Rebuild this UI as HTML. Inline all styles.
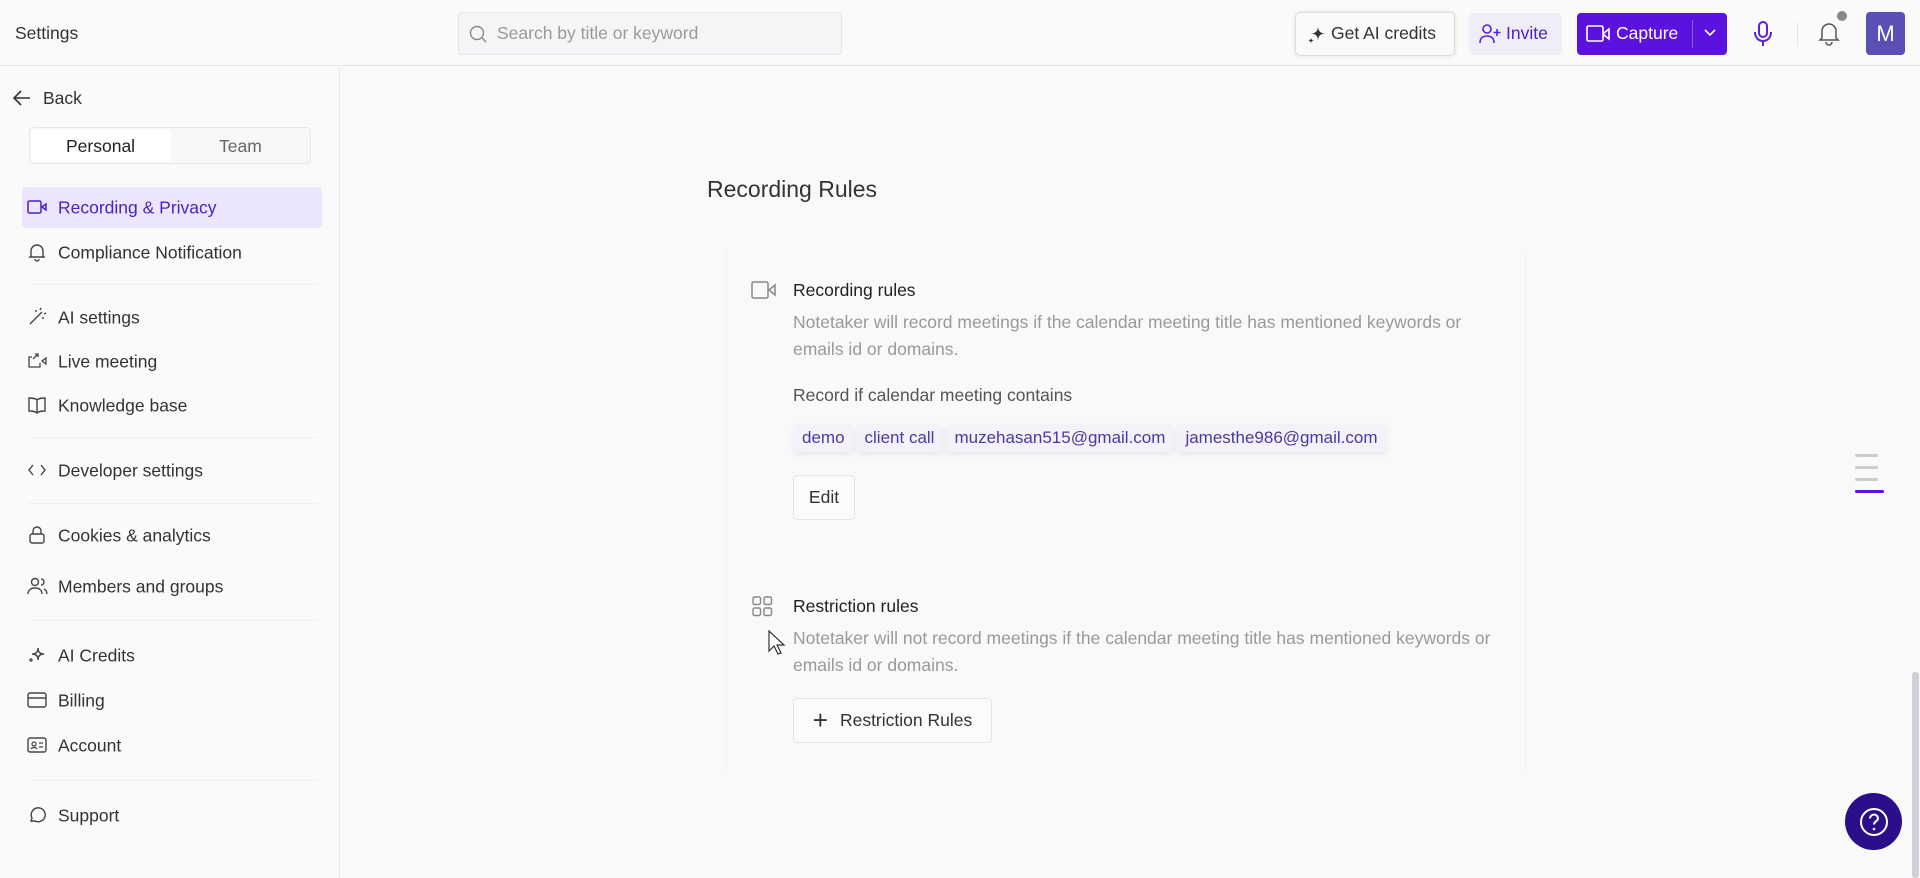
<!DOCTYPE html>
<html><head><meta charset="utf-8"><style>
*{box-sizing:border-box;margin:0;padding:0}
body{width:1920px;height:878px;background:#f9f9f9;font-family:"Liberation Sans",sans-serif;color:#333;position:relative;overflow:hidden}
.a{position:absolute}
.hdr{left:0;top:0;width:1920px;height:66px;border-bottom:1px solid #e6e6e6;background:#fafafa}
.side{left:0;top:67px;width:340px;height:811px;border-right:1px solid #e8e8e8;background:#fafafa}
.it{position:absolute;left:58px;font-size:17.5px;color:#333;transform:translateY(-50%)}
.ic{position:absolute;left:27px;transform:translateY(-50%)}
.sep{position:absolute;left:28px;width:290px;height:1px;background:#f0f0f0}
svg{display:block}
.chip{display:inline-block;font-size:17px;color:#4a3aa0;padding:4px 8px;margin-right:4px;background:#f3f2f9;border-radius:4px;box-shadow:0 3px 6px rgba(90,80,180,.10)}
.btn{border:1px solid #e6e6e6;border-radius:4px;background:#fbfbfb;font-size:17.5px;color:#333;display:flex;align-items:center;justify-content:center}
</style></head><body>
<div class="a hdr"></div>
<div class="a" style="left:15px;top:23px;font-size:17.5px;color:#333">Settings</div>
<div class="a" style="left:458px;top:12px;width:384px;height:43px;border:1px solid #e4e4ea;border-radius:4px;background:#f5f5f7"></div>
<svg class="a" style="left:468px;top:24px" width="20" height="20" viewBox="0 0 20 20"><circle cx="9" cy="9" r="6.5" fill="none" stroke="#888" stroke-width="1.4"/><path d="M14 14l4 4" stroke="#888" stroke-width="1.4"/></svg>
<div class="a" style="left:497px;top:23px;font-size:17.5px;color:#999">Search by title or keyword</div>
<div class="a" style="left:1295px;top:12px;width:160px;height:44px;border:1px solid #ddd;border-radius:5px;background:#fafafa;box-shadow:0 0 4px rgba(0,0,0,.12)"></div>
<svg class="a" style="left:1306px;top:24px" width="22" height="22" viewBox="0 0 22 22"><path d="M12 2c0 5 2.5 7.5 7.5 7.5-5 0-7.5 2.5-7.5 7.5 0-5-2.5-7.5-7.5-7.5 5 0 7.5-2.5 7.5-7.5z" fill="#333"/><path d="M5 13c0 2.5 1 3.5 3.5 3.5-2.5 0-3.5 1-3.5 3.5 0-2.5-1-3.5-3.5-3.5 2.5 0 3.5-1 3.5-3.5z" fill="#333"/></svg>
<div class="a" style="left:1331px;top:23px;font-size:17.5px;color:#333">Get AI credits</div>
<div class="a" style="left:1469px;top:13px;width:93px;height:42px;border-radius:5px;background:#efedf8"></div>
<svg class="a" style="left:1478px;top:23px" width="24" height="22" viewBox="0 0 24 22"><circle cx="9" cy="6" r="4" fill="none" stroke="#5b21d6" stroke-width="1.6"/><path d="M2 20c0-5 3-7 7-7s7 2 7 7M19 6v7M15.5 9.5h7" fill="none" stroke="#5b21d6" stroke-width="1.6"/></svg>
<div class="a" style="left:1506px;top:23px;font-size:17.5px;color:#4b1fc4">Invite</div>
<div class="a" style="left:1577px;top:13px;width:150px;height:42px;border-radius:4px;background:#5b12df"></div>
<svg class="a" style="left:1586px;top:24px" width="26" height="20" viewBox="0 0 26 20"><rect x="1" y="2" width="16" height="15" rx="1.5" fill="none" stroke="#fff" stroke-width="1.6"/><path d="M18 9l5-4v10l-5-4z" fill="none" stroke="#fff" stroke-width="1.6"/></svg>
<div class="a" style="left:1616px;top:23px;font-size:17.5px;color:#fff">Capture</div>
<div class="a" style="left:1692px;top:20px;width:1px;height:28px;background:#8a5ff0"></div>
<svg class="a" style="left:1703px;top:28px" width="14" height="10" viewBox="0 0 14 10"><path d="M2 2l5 5 5-5" fill="none" stroke="#fff" stroke-width="1.6"/></svg>
<svg class="a" style="left:1752px;top:20px" width="22" height="28" viewBox="0 0 22 28"><rect x="7" y="2" width="8" height="15" rx="4" fill="none" stroke="#5b21d6" stroke-width="2"/><path d="M3 12c0 6 4 9 8 9s8-3 8-9M11 21v5" fill="none" stroke="#5b21d6" stroke-width="2"/></svg>
<div class="a" style="left:1797px;top:22px;width:1px;height:24px;background:#e5e5e5"></div>
<svg class="a" style="left:1818px;top:20px" width="22" height="26" viewBox="0 0 22 26"><path d="M4 18V11a7 7 0 0114 0v7l2 2H2z M8 22a3 3 0 006 0" fill="none" stroke="#555" stroke-width="1.5"/></svg>
<div class="a" style="left:1837px;top:11px;width:10px;height:10px;border-radius:50%;background:#888"></div>
<div class="a" style="left:1866px;top:12px;width:39px;height:43px;border-radius:4px;background:#5a4fb5;color:#fff;font-size:22px;display:flex;align-items:center;justify-content:center">M</div>

<div class="a side"></div>
<svg class="a" style="left:12px;top:89px" width="20" height="18" viewBox="0 0 20 18"><path d="M18 9H3M9 2L2 9l7 7" fill="none" stroke="#333" stroke-width="1.6"/></svg>
<div class="a" style="left:43px;top:88px;font-size:17.5px;color:#333">Back</div>
<div class="a" style="left:29px;top:127px;width:282px;height:37px;border:1px solid #e8e8e8;border-radius:4px;background:#f7f7f7"></div>
<div class="a" style="left:31px;top:129px;width:140px;height:33px;background:#fff;border-radius:3px"></div>
<div class="a" style="left:66px;top:136px;font-size:17.5px;color:#222">Personal</div>
<div class="a" style="left:219px;top:136px;font-size:17.5px;color:#666">Team</div>
<div class="a" style="left:22px;top:187px;width:300px;height:41px;border-radius:4px;background:#ebe6fb"></div>
<svg class="ic" style="top:207px" width="22" height="16" viewBox="0 0 22 16"><rect x="1" y="2" width="13" height="12" rx="1.5" fill="none" stroke="#4b1fc4" stroke-width="1.5"/><path d="M15 8l4-3v6z" fill="none" stroke="#4b1fc4" stroke-width="1.5"/></svg>
<div class="it" style="top:208px;color:#4b1fc4">Recording &amp; Privacy</div>
<svg class="ic" style="top:252px" width="20" height="20" viewBox="0 0 20 20"><path d="M4 14V9a6 6 0 0112 0v5l1 1H3z M8 17a2 2 0 004 0" fill="none" stroke="#444" stroke-width="1.4"/></svg>
<div class="it" style="top:253px">Compliance Notification</div>
<div class="sep" style="top:284px"></div>
<svg class="ic" style="top:317px" width="20" height="20" viewBox="0 0 20 20"><path d="M3 17L15 5M13 3l1-2M17 7l2-1M9 3v2M15 11h2" fill="none" stroke="#444" stroke-width="1.4"/></svg>
<div class="it" style="top:318px">AI settings</div>
<svg class="ic" style="top:361px" width="20" height="16" viewBox="0 0 20 16"><path d="M5 4H2v10h11V10M15 8l4-3v6z M6 6l5-5M8 1h3v3" fill="none" stroke="#444" stroke-width="1.3"/></svg>
<div class="it" style="top:362px">Live meeting</div>
<svg class="ic" style="top:405px" width="20" height="18" viewBox="0 0 20 18"><path d="M10 4v13M10 4C8 2 5 2 2 2v13c3 0 6 0 8 2 2-2 5-2 8-2V2c-3 0-6 0-8 2z" fill="none" stroke="#444" stroke-width="1.4"/></svg>
<div class="it" style="top:406px">Knowledge base</div>
<div class="sep" style="top:437px"></div>
<svg class="ic" style="top:470px" width="20" height="16" viewBox="0 0 20 16"><path d="M6 3L2 8l4 5M14 3l4 5-4 5" fill="none" stroke="#444" stroke-width="1.4"/></svg>
<div class="it" style="top:471px">Developer settings</div>
<div class="sep" style="top:503px"></div>
<svg class="ic" style="top:535px" width="20" height="20" viewBox="0 0 20 20"><rect x="3" y="9" width="14" height="9" rx="2" fill="none" stroke="#444" stroke-width="1.4"/><path d="M6 9V6a4 4 0 018 0v3" fill="none" stroke="#444" stroke-width="1.4"/></svg>
<div class="it" style="top:536px">Cookies &amp; analytics</div>
<svg class="ic" style="top:586px" width="22" height="20" viewBox="0 0 22 20"><circle cx="8" cy="6" r="3.5" fill="none" stroke="#444" stroke-width="1.4"/><path d="M1 18c0-4 3-6 7-6s7 2 7 6M14 3a3 3 0 010 6M17 13c2 1 3 3 3 5" fill="none" stroke="#444" stroke-width="1.4"/></svg>
<div class="it" style="top:587px">Members and groups</div>
<div class="sep" style="top:620px"></div>
<svg class="ic" style="top:655px" width="20" height="20" viewBox="0 0 20 20"><path d="M11 3c0 4 2 6 6 6-4 0-6 2-6 6 0-4-2-6-6-6 4 0 6-2 6-6z" fill="none" stroke="#444" stroke-width="1.4"/><path d="M4 13v4M2 15h4" stroke="#444" stroke-width="1.3"/></svg>
<div class="it" style="top:656px">AI Credits</div>
<svg class="ic" style="top:700px" width="20" height="16" viewBox="0 0 20 16"><rect x="1" y="1" width="18" height="14" rx="2" fill="none" stroke="#444" stroke-width="1.4"/><path d="M1 6h18" stroke="#444" stroke-width="1.4"/></svg>
<div class="it" style="top:701px">Billing</div>
<svg class="ic" style="top:745px" width="20" height="16" viewBox="0 0 20 16"><rect x="1" y="1" width="18" height="14" rx="2" fill="none" stroke="#444" stroke-width="1.4"/><circle cx="7" cy="7" r="2" fill="none" stroke="#444" stroke-width="1.2"/><path d="M4 12c1-2 5-2 6 0M12 6h4M12 10h4" stroke="#444" stroke-width="1.2" fill="none"/></svg>
<div class="it" style="top:746px">Account</div>
<div class="sep" style="top:780px"></div>
<svg class="ic" style="top:815px" width="20" height="20" viewBox="0 0 20 20"><path d="M4 16l1-3a7 7 0 113 3z" fill="none" stroke="#444" stroke-width="1.4"/></svg>
<div class="it" style="top:816px">Support</div>

<div class="a" style="left:707px;top:176px;font-size:23px;color:#333">Recording Rules</div>
<div class="a" style="left:726px;top:251px;width:800px;height:520px;border-left:1px solid #f0f0f0;border-right:1px solid #f0f0f0"></div>
<svg class="a" style="left:751px;top:281px" width="26" height="18" viewBox="0 0 26 18"><rect x="1" y="1" width="16" height="16" rx="1.5" fill="none" stroke="#888" stroke-width="1.5"/><path d="M18 9l6-5v10z" fill="none" stroke="#888" stroke-width="1.5"/></svg>
<div class="a" style="left:793px;top:280px;font-size:17.5px;color:#222">Recording rules</div>
<div class="a" style="left:793px;top:309px;width:720px;font-size:17.5px;line-height:27px;color:#999">Notetaker will record meetings if the calendar meeting title has mentioned keywords or emails id or domains.</div>
<div class="a" style="left:793px;top:385px;font-size:17.5px;color:#555">Record if calendar meeting contains</div>
<div class="a" style="left:794px;top:424px;white-space:nowrap"><span class="chip">demo</span><span class="chip">client call</span><span class="chip">muzehasan515@gmail.com</span><span class="chip">jamesthe986@gmail.com</span></div>
<div class="a btn" style="left:793px;top:475px;width:62px;height:45px">Edit</div>
<svg class="a" style="left:752px;top:596px" width="22" height="22" viewBox="0 0 22 22"><rect x="1" y="1" width="7.5" height="7.5" rx="1.5" fill="none" stroke="#888" stroke-width="1.4"/><rect x="12" y="1" width="7.5" height="7.5" rx="1.5" fill="none" stroke="#888" stroke-width="1.4"/><rect x="1" y="12" width="7.5" height="7.5" rx="1.5" fill="none" stroke="#888" stroke-width="1.4"/><rect x="12" y="12" width="7.5" height="7.5" rx="1.5" fill="none" stroke="#888" stroke-width="1.4"/></svg>
<div class="a" style="left:793px;top:596px;font-size:17.5px;color:#222">Restriction rules</div>
<div class="a" style="left:793px;top:625px;width:720px;font-size:17.5px;line-height:27px;color:#999">Notetaker will not record meetings if the calendar meeting title has mentioned keywords or emails id or domains.</div>
<svg class="a" style="left:768px;top:630px" width="18" height="26" viewBox="0 0 18 26"><path d="M1 1v20l5-5 4 8 3-1-4-8h7z" fill="#fff" stroke="#333" stroke-width="1.2"/></svg>
<div class="a btn" style="left:793px;top:698px;width:199px;height:45px"><span style="font-size:26px;font-weight:300;margin-right:12px;color:#333">+</span>Restriction Rules</div>

<div class="a" style="left:1855px;top:454px;width:23px;height:3px;border-radius:2px;background:#ccc"></div>
<div class="a" style="left:1855px;top:466px;width:23px;height:3px;border-radius:2px;background:#ccc"></div>
<div class="a" style="left:1855px;top:478px;width:23px;height:3px;border-radius:2px;background:#ccc"></div>
<div class="a" style="left:1855px;top:490px;width:29px;height:3px;border-radius:2px;background:#5b12df"></div>
<div class="a" style="left:1912px;top:672px;width:7px;height:206px;border-radius:3px;background:#cfcfd6"></div>
<div class="a" style="left:1845px;top:793px;width:57px;height:57px;border-radius:50%;background:#2b0f8a;display:flex;align-items:center;justify-content:center">
<svg width="32" height="32" viewBox="0 0 32 32"><circle cx="16" cy="16" r="13" fill="none" stroke="#fff" stroke-width="2"/><path d="M12 12.5a4 4 0 118 0c0 2.5-4 3-4 6" fill="none" stroke="#fff" stroke-width="2"/><circle cx="16" cy="23" r="1.3" fill="#fff"/></svg></div>
</body></html>
